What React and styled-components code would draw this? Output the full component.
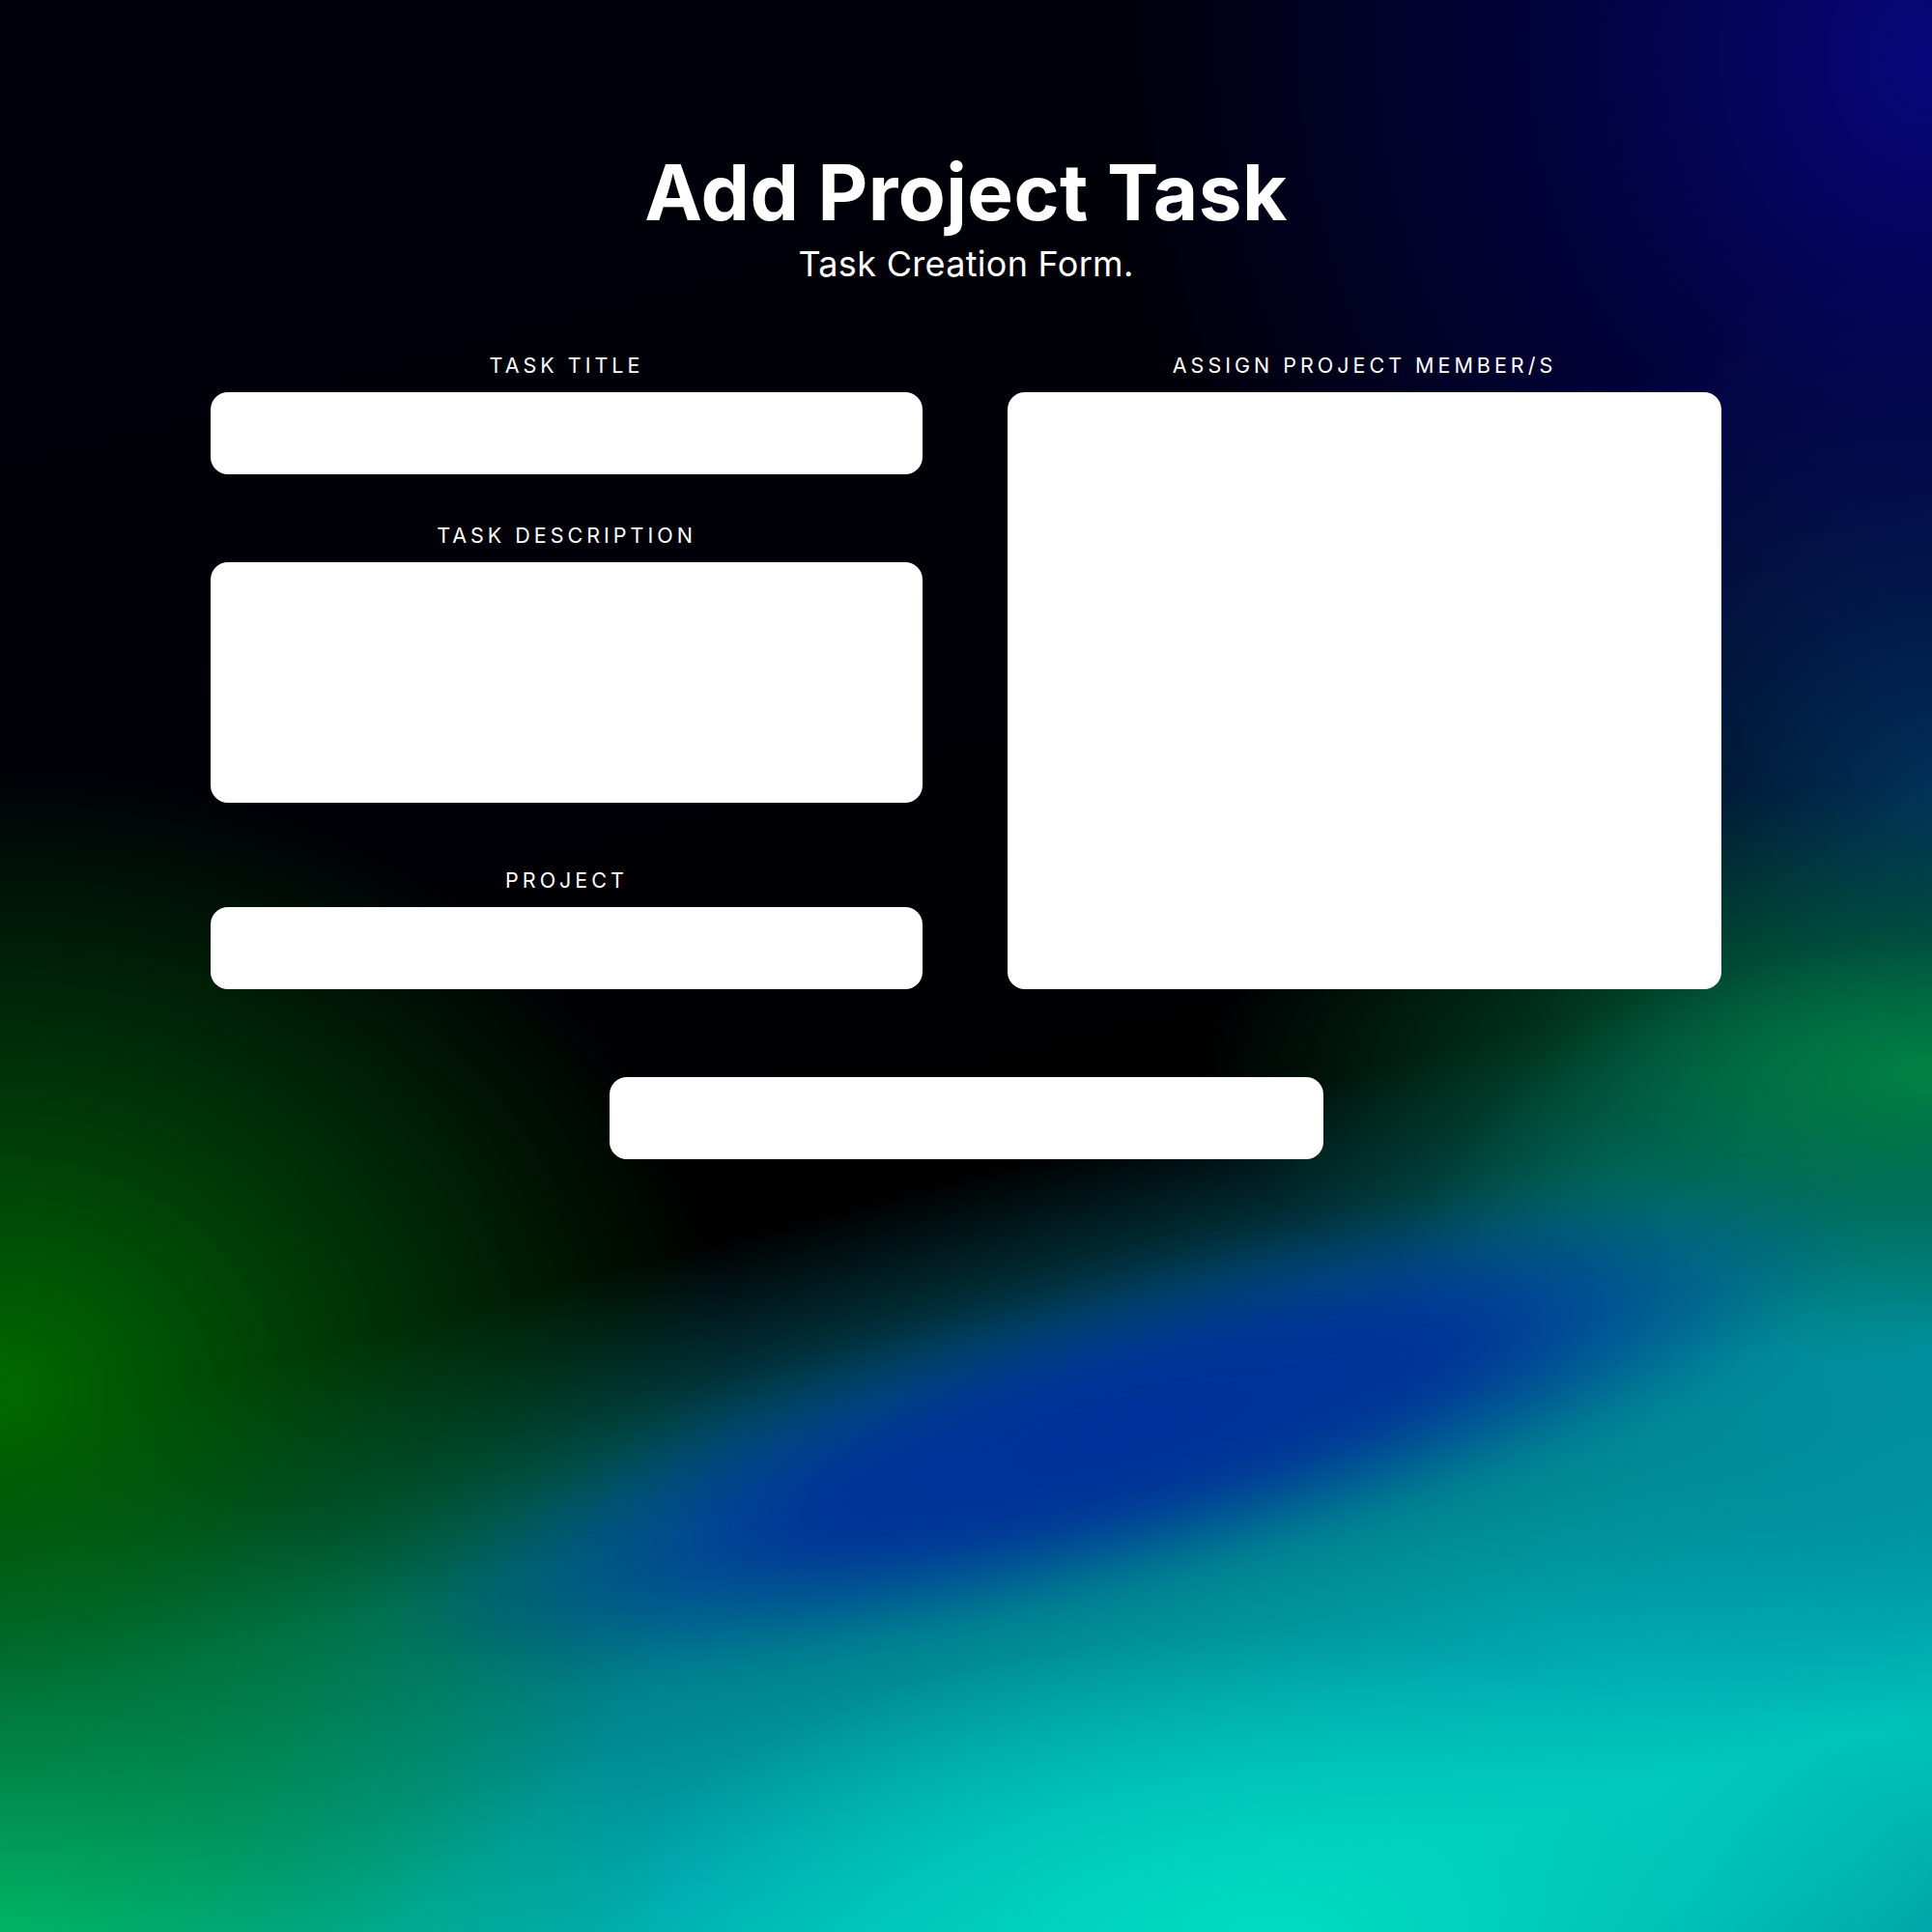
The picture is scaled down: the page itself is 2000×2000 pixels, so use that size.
import styled, { createGlobalStyle } from "styled-components";

const GlobalStyle = createGlobalStyle`
  html, body {
    margin: 0;
    padding: 0;
    background: #000;
  }
  #root {
    width: 2000px;
  }
`;

const Page = styled.div`
  position: relative;
  width: 2000px;
  height: 2000px;
  overflow: hidden;
  isolation: isolate;
  background-color: #000;
  background-image:
    radial-gradient(ellipse 850px 950px at 2000px 60px, #07077c 0%, rgba(4,4,100,0.65) 40%, rgba(0,0,40,0) 100%),
    radial-gradient(ellipse 760px 300px at 2000px 1110px, #008242 0%, rgba(0,110,60,0.55) 45%, rgba(0,60,40,0) 100%),
    radial-gradient(ellipse 460px 560px at 2000px 820px, #003e55 0%, rgba(0,55,75,0.55) 50%, rgba(0,40,60,0) 100%),
    radial-gradient(ellipse 560px 420px at 2000px 1380px, #0090a0 0%, rgba(0,140,155,0.6) 50%, rgba(0,120,140,0) 100%),
    radial-gradient(ellipse 760px 650px at 0px 1440px, #006a00 0%, rgba(0,95,10,0.65) 40%, rgba(0,50,0,0) 100%),
    radial-gradient(ellipse 700px 480px at 0px 2000px, #00c474 0%, rgba(0,180,110,0.6) 45%, rgba(0,160,120,0) 100%),
    radial-gradient(ellipse 700px 320px at 1320px 2010px, #00dcc2 0%, rgba(0,215,192,0.6) 45%, rgba(0,200,185,0) 100%),
    linear-gradient(165deg, #00000c 0%, #000006 40%, #000 58.5%, #003038 64%, #007580 70%, #008a94 78%, #00aab0 85%, #00c4bc 91%, #00b4b2 96%, #00a4a8 100%);
  font-family: "Inter", "Noto Sans", sans-serif;
  color: #fff;

  /* blue swoosh that crosses the lower half */
  &::before {
    content: "";
    position: absolute;
    left: 380px;
    top: 1315px;
    width: 1580px;
    height: 330px;
    transform: rotate(-15deg);
    background: radial-gradient(closest-side, #002e9a 0%, rgba(0,46,154,0.9) 45%, rgba(0,60,150,0.35) 80%, rgba(0,60,150,0) 100%);
    filter: blur(24px);
    z-index: -1;
  }
`;

const Header = styled.header`
  display: flex;
  flex-direction: column;
  align-items: center;
  padding-top: 153px;
`;

const Title = styled.h1`
  margin: 0;
  font-family: "Inter", sans-serif;
  font-weight: 700;
  font-size: 80px;
  line-height: 92px;
  letter-spacing: 0.4px;
`;

const Subtitle = styled.p`
  margin: 0;
  font-family: "Inter", sans-serif;
  font-weight: 400;
  font-size: 36px;
  line-height: 44px;
  letter-spacing: 0.3px;
  margin-top: 6px;
`;

const FormGrid = styled.div`
  display: grid;
  grid-template-columns: 737px 739px;
  column-gap: 88px;
  justify-content: center;
  margin-top: 71px;
`;

const Column = styled.div`
  display: flex;
  flex-direction: column;
`;

const Field = styled.div`
  display: flex;
  flex-direction: column;
  align-items: stretch;
  gap: 16px;
  margin-top: ${(p) => p.$offset || 0}px;
  flex: ${(p) => (p.$grow ? 1 : "none")};
`;

const Label = styled.label`
  display: block;
  text-align: center;
  font-family: "Inter", sans-serif;
  font-weight: 400;
  font-size: 21.5px;
  line-height: 24px;
  letter-spacing: 4px;
  text-transform: uppercase;
`;

const InputBox = styled.div`
  background: #fff;
  border-radius: 18px;
  height: ${(p) => (p.$height ? `${p.$height}px` : "auto")};
  flex: ${(p) => (p.$grow ? 1 : "none")};
`;

const SubmitRow = styled.div`
  display: flex;
  justify-content: center;
  margin-top: 91px;
`;

const SubmitButton = styled.button`
  width: 739px;
  height: 85px;
  border: none;
  border-radius: 18px;
  background: #fff;
  cursor: pointer;
`;

const App = () => {
  return (
    <>
      <GlobalStyle />
      <Page>
        <Header>
          <Title>Add Project Task</Title>
          <Subtitle>Task Creation Form.</Subtitle>
        </Header>

        <FormGrid>
          <Column>
            <Field>
              <Label>Task Title</Label>
              <InputBox $height={85} />
            </Field>
            <Field $offset={51}>
              <Label>Task Description</Label>
              <InputBox $height={249} />
            </Field>
            <Field $offset={68}>
              <Label>Project</Label>
              <InputBox $height={85} />
            </Field>
          </Column>

          <Column>
            <Field $grow>
              <Label>Assign Project Member/s</Label>
              <InputBox $grow />
            </Field>
          </Column>
        </FormGrid>

        <SubmitRow>
          <SubmitButton type="button" />
        </SubmitRow>
      </Page>
    </>
  );
};

export default App;
